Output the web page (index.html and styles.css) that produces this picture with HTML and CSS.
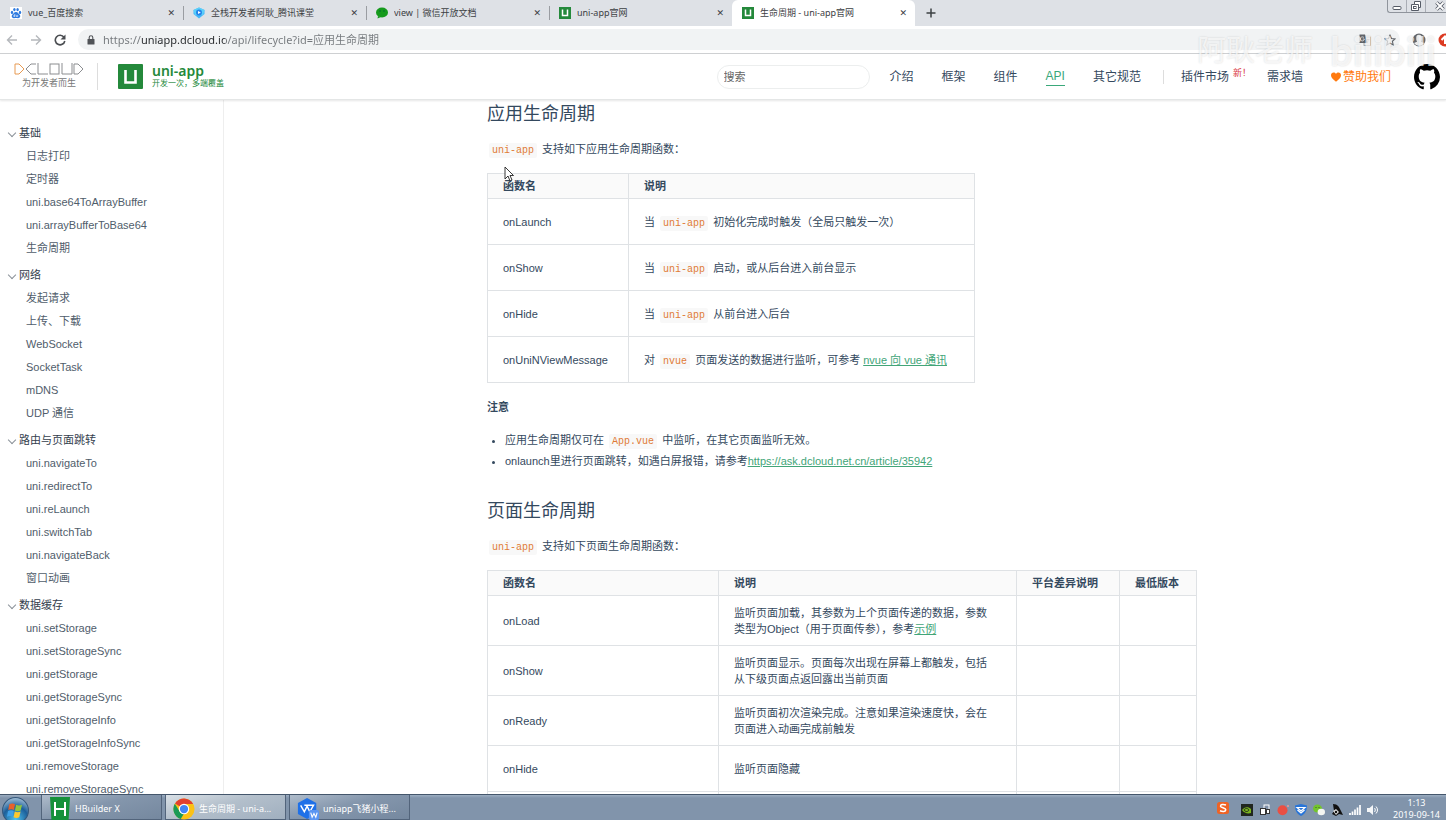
FILE: index.html
```html
<!DOCTYPE html>
<html lang="zh-CN">
<head>
<meta charset="utf-8">
<title>生命周期 - uni-app官网</title>
<link rel="stylesheet" href="styles.css">
</head>
<body>
<div class="screen">
  <div class="tabstrip">
    <div class="tab">
      <svg class="favicon" viewBox="0 0 12 12"><rect width="12" height="12" fill="#fff"/><g fill="#2f7be0"><ellipse cx="2" cy="5.4" rx="1.2" ry="1.6"/><ellipse cx="4.4" cy="2.6" rx="1.2" ry="1.7"/><ellipse cx="7.6" cy="2.6" rx="1.2" ry="1.7"/><ellipse cx="10" cy="5.4" rx="1.2" ry="1.6"/><path d="M6 5c2 0 2.300 1.500 3.500 2.600C11 9 10.200 11.300 8 11.200c-1.500-.2-2.500-.2-4 0C1.800 11.300 1 9 2.500 7.600 3.700 6.500 4 5 6 5z"/></g><path d="M4.800 7v2.500h-1v-1.200h1M6.300 7.900v1.600h1.400V7.900" fill="none" stroke="#fff" stroke-width=".6"/></svg>
      <span class="tab-title">vue_百度搜索</span><button class="tab-close" aria-label="关闭标签页">✕</button>
    </div>
    <div class="tab divided">
      <svg class="favicon" viewBox="0 0 12 12"><path d="M6 .5 11.500 3v4L6 11.500.5 7V3z" fill="#45b6f7"/><path d="M.5 3 6 .5 11.500 3 10 8H2z" fill="#5bd0fa"/><circle cx="6" cy="5.500" r="3" fill="#2584ea"/><path d="m5 4 2.800 1.500L5 7z" fill="#fff"/></svg>
      <span class="tab-title">全栈开发者阿耿_腾讯课堂</span><button class="tab-close" aria-label="关闭标签页">✕</button>
    </div>
    <div class="tab divided">
      <svg class="favicon" viewBox="0 0 12 12"><ellipse cx="6" cy="5.500" rx="6" ry="5" fill="#159a1c"/><path d="M2 9 1.500 11.500 5 10z" fill="#159a1c"/><circle cx="4" cy="4" r=".8" fill="#063"/><circle cx="8" cy="4" r=".8" fill="#063"/></svg>
      <span class="tab-title">view | 微信开放文档</span><button class="tab-close" aria-label="关闭标签页">✕</button>
    </div>
    <div class="tab divided">
      <svg class="favicon" viewBox="0 0 12 12"><rect width="12" height="12" fill="#24893b"/><path d="M3.500 2.500v6h5v-6" fill="none" stroke="#fff" stroke-width="1.500"/></svg>
      <span class="tab-title">uni-app官网</span><button class="tab-close" aria-label="关闭标签页">✕</button>
    </div>
    <div class="tab active">
      <svg class="favicon" viewBox="0 0 12 12"><rect width="12" height="12" fill="#24893b"/><path d="M3.500 2.500v6h5v-6" fill="none" stroke="#fff" stroke-width="1.500"/></svg>
      <span class="tab-title">生命周期 - uni-app官网</span><button class="tab-close" aria-label="关闭标签页">✕</button>
    </div>
    <button class="new-tab" aria-label="新标签页"><svg viewBox="0 0 10 10"><path d="M5 .5v9M.5 5h9" stroke="#3c4043" stroke-width="1.500"/></svg></button>
    <div class="window-controls">
      <button aria-label="最小化"><svg viewBox="0 0 12 12"><rect x="2" y="6.500" width="8" height="3" rx="1" fill="#fff" stroke="#555b66"/></svg></button>
      <button aria-label="还原"><svg viewBox="0 0 12 12"><path d="M4.500 1.500h6v6h-2v3h-7v-6h3z" fill="#fff" stroke="#555b66"/><path d="M4.500 4.500h4v4" fill="none" stroke="#555b66"/><rect x="3.500" y="6.500" width="2.500" height="2" fill="none" stroke="#555b66"/></svg></button>
      <button class="wide" aria-label="关闭"><svg viewBox="0 0 12 12"><path d="m2.500 2.500 7 7m0-7-7 7" stroke="#555b66" stroke-width="3.500"/><path d="m2.500 2.500 7 7m0-7-7 7" stroke="#fff" stroke-width="1.800"/></svg></button>
    </div>
  </div>

  <div class="toolbar">
    <button class="tool" aria-label="后退"><svg viewBox="0 0 12 12"><path d="M11 6H1.500M6 1.500 1.500 6 6 10.500" fill="none" stroke="#b5b8bc" stroke-width="1.400"/></svg></button>
    <button class="tool" aria-label="前进"><svg viewBox="0 0 12 12"><path d="M1 6h9.500M6 1.500 10.500 6 6 10.500" fill="none" stroke="#b5b8bc" stroke-width="1.400"/></svg></button>
    <button class="tool" aria-label="重新加载"><svg viewBox="0 0 12 12"><path d="M10 3.200A4.800 4.800 0 1 0 10.800 7" fill="none" stroke="#4a4d51" stroke-width="1.600"/><path d="M11.500.5v5h-5z" fill="#4a4d51"/></svg></button>
    <div class="omnibox">
      <svg class="lock" viewBox="0 0 8 10"><rect x=".5" y="4" width="7" height="5.500" rx=".6" fill="#505357"/><path d="M2.200 4V2.600a1.800 1.800 0 0 1 3.600 0V4" fill="none" stroke="#505357" stroke-width="1.100"/></svg>
      <input class="url" aria-label="地址栏" value="https://uniapp.dcloud.io/api/lifecycle?id=应用生命周期">
      <svg class="omni-icon" viewBox="0 0 12 12"><rect x="5" y="3" width="6.500" height="8.500" fill="#eee" stroke="#999" stroke-width=".8"/><path d="M.5.5H6l2.500 8.500h-8z" fill="#5f6368"/><path d="M5 3.700A2 2 0 1 0 5.400 5H3.700" fill="none" stroke="#eee" stroke-width=".8"/><path d="M7.500 5.500h3M9 5.500v1c0 1-1 2-1.500 2.500" fill="none" stroke="#888" stroke-width=".7"/></svg>
      <svg class="omni-icon" viewBox="0 0 12 12"><path d="m6 1.200 1.500 3.300 3.600.4-2.700 2.400.8 3.600L6 9.100l-3.200 1.800.8-3.600L.9 4.900l3.600-.4z" fill="none" stroke="#5f6368" stroke-width="1.100"/></svg>
    </div>
    <svg class="avatar" viewBox="0 0 14 14"><circle cx="7" cy="7" r="6.500" fill="#65696e"/><path d="M4.300 4.500a2.700 2.700 0 0 1 5.400 0v2c0 1-.7 1.600-.7 2.200l3 1.300A6 6 0 0 1 2 10l3-1.300c0-.6-.7-1.200-.7-2.200z" fill="#eee"/></svg>
    <svg class="extension" viewBox="0 0 14 14"><circle cx="7" cy="7" r="6.500" fill="#dc3b22"/><path d="M7 3v8M3.500 7 7 3.500 10.500 7" stroke="#fff" stroke-width="2" fill="none"/></svg>
  </div>

  <header class="site-header">
    <div class="dcloud">
      <svg viewBox="0 0 70 12" role="img" aria-label="DCLOUD"><g fill="none" stroke-width="1"><polyline points="1,1 5,1 10,6 5,11 1,11 1,1" stroke="#e79a52"/><g stroke="#8b8d90"><polyline points="22,1 17,1 12,6 17,11 22,11"/><polyline points="24,0 24,11 34,11"/><rect x="36" y="1" width="9" height="10"/><polyline points="48,0 48,11 58,11 58,0"/><polyline points="60,1 64,1 69,6 64,11 60,11 60,1"/></g></g></svg>
      <span>为开发者而生</span>
    </div>
    <a class="brand" href="#">
      <svg viewBox="0 0 25 25"><rect width="25" height="25" rx="1" fill="#24893b"/><path d="M7.500 6v12.500h10V6" fill="none" stroke="#fff" stroke-width="2.600"/></svg>
      <span class="brand-text"><strong>uni-app</strong><small>开发一次，多端覆盖</small></span>
    </a>
    <input class="search" type="search" placeholder="搜索" aria-label="搜索">
    <nav class="nav">
      <a href="#">介绍</a><a href="#">框架</a><a href="#">组件</a><a href="#" class="current">API</a><a href="#">其它规范</a>
      <span class="rule"></span>
      <a href="#" class="market">插件市场<sup>新！</sup></a><a href="#">需求墙</a>
      <a href="#" class="sponsor"><svg viewBox="0 0 10 10"><path d="M5 9.700C2 7.200 0 5.500 0 3.200 0 .2 3.700-.3 5 2c1.300-2.300 5-1.800 5 1.200 0 2.300-2 4-5 6.500z" fill="#ff7a0f"/></svg>赞助我们</a>
      <a href="#" class="github" aria-label="GitHub"><svg viewBox="0 0 16 16"><path d="M8 0C3.580 0 0 3.580 0 8c0 3.540 2.290 6.530 5.470 7.590.4.070.55-.17.55-.38 0-.19-.01-.82-.01-1.490-2.010.37-2.530-.49-2.690-.94-.09-.23-.48-.94-.82-1.130-.28-.15-.68-.52-.01-.53.63-.01 1.080.58 1.230.82.72 1.210 1.870.87 2.330.66.070-.52.28-.87.51-1.070-1.780-.2-3.640-.89-3.640-3.950 0-.87.31-1.590.82-2.150-.08-.2-.36-1.020.08-2.120 0 0 .67-.21 2.200.82a7.600 7.600 0 0 1 4 0c1.530-1.040 2.200-.82 2.200-.82.44 1.100.16 1.920.08 2.120.51.56.82 1.270.82 2.150 0 3.070-1.870 3.750-3.650 3.950.29.25.54.73.54 1.480 0 1.070-.01 1.930-.01 2.200 0 .21.15.46.55.38A8 8 0 0 0 16 8c0-4.420-3.580-8-8-8z"/></svg></a>
    </nav>
  </header>

  <div class="page">
    <aside class="sidebar">
      <details open><summary>基础</summary>
        <a href="#">日志打印</a><a href="#">定时器</a><a href="#">uni.base64ToArrayBuffer</a><a href="#">uni.arrayBufferToBase64</a><a href="#">生命周期</a></details>
      <details open><summary>网络</summary>
        <a href="#">发起请求</a><a href="#">上传、下载</a><a href="#">WebSocket</a><a href="#">SocketTask</a><a href="#">mDNS</a><a href="#">UDP 通信</a></details>
      <details open><summary>路由与页面跳转</summary>
        <a href="#">uni.navigateTo</a><a href="#">uni.redirectTo</a><a href="#">uni.reLaunch</a><a href="#">uni.switchTab</a><a href="#">uni.navigateBack</a><a href="#">窗口动画</a></details>
      <details open><summary>数据缓存</summary>
        <a href="#">uni.setStorage</a><a href="#">uni.setStorageSync</a><a href="#">uni.getStorage</a><a href="#">uni.getStorageSync</a><a href="#">uni.getStorageInfo</a><a href="#">uni.getStorageInfoSync</a><a href="#">uni.removeStorage</a><a href="#">uni.removeStorageSync</a></details>
    </aside>

    <main class="content">
      <article class="article">
        <h2>应用生命周期</h2>
        <p><code>uni-app</code> 支持如下应用生命周期函数：</p>
        <table class="app-table">
          <colgroup><col class="c-name"><col></colgroup>
          <thead><tr><th>函数名</th><th>说明</th></tr></thead>
          <tbody>
            <tr><td>onLaunch</td><td>当 <code>uni-app</code> 初始化完成时触发（全局只触发一次）</td></tr>
            <tr><td>onShow</td><td>当 <code>uni-app</code> 启动，或从后台进入前台显示</td></tr>
            <tr><td>onHide</td><td>当 <code>uni-app</code> 从前台进入后台</td></tr>
            <tr><td>onUniNViewMessage</td><td>对 <code>nvue</code> 页面发送的数据进行监听，可参考 <a href="#">nvue 向 vue 通讯</a></td></tr>
          </tbody>
        </table>
        <p class="note"><strong>注意</strong></p>
        <ul>
          <li>应用生命周期仅可在 <code>App.vue</code> 中监听，在其它页面监听无效。</li>
          <li>onlaunch里进行页面跳转，如遇白屏报错，请参考<a href="#">https://ask.dcloud.net.cn/article/35942</a></li>
        </ul>
        <h2 class="second">页面生命周期</h2>
        <p><code>uni-app</code> 支持如下页面生命周期函数：</p>
        <table class="page-table">
          <colgroup><col class="c-func"><col class="c-desc"><col class="c-platform"><col></colgroup>
          <thead><tr><th>函数名</th><th>说明</th><th>平台差异说明</th><th>最低版本</th></tr></thead>
          <tbody>
            <tr><td>onLoad</td><td>监听页面加载，其参数为上个页面传递的数据，参数<br>类型为Object（用于页面传参），参考<a href="#">示例</a></td><td></td><td></td></tr>
            <tr><td>onShow</td><td>监听页面显示。页面每次出现在屏幕上都触发，包括<br>从下级页面点返回露出当前页面</td><td></td><td></td></tr>
            <tr><td>onReady</td><td>监听页面初次渲染完成。注意如果渲染速度快，会在<br>页面进入动画完成前触发</td><td></td><td></td></tr>
            <tr><td>onHide</td><td>监听页面隐藏</td><td></td><td></td></tr>
            <tr><td></td><td></td><td></td><td></td></tr>
          </tbody>
        </table>
      </article>
    </main>
  </div>

  <footer class="taskbar">
    <button class="start" aria-label="开始"><svg viewBox="0 0 26 26"><defs><radialGradient id="orb" cx=".5" cy=".85" r=".9"><stop offset="0" stop-color="#4fc3ee"/><stop offset=".55" stop-color="#1c5f9a"/><stop offset="1" stop-color="#b9cfe0"/></radialGradient></defs><circle cx="13" cy="13" r="12.500" fill="url(#orb)" stroke="#35587c"/><path d="M7 7c2-1 4-1 5.500 0L11.500 12.500C10 11.500 8 11.600 6 12.500z" fill="#e8622a"/><path d="M13.500 7.500c2 1 3.800 1 5.800 0L18 13c-2 1-4 .8-5.500 0z" fill="#8fc63f"/><path d="M5.800 13.500c2-1 4-1 5.500 0L10.200 19c-1.600-1-3.600-1-5.400 0z" fill="#3fa0e6"/><path d="M12.300 14c1.800 1 3.700 1 5.600 0l-1.300 5.500c-1.800 1-3.800.8-5.500 0z" fill="#fcc92f"/></svg></button>
    <button class="task"><svg viewBox="0 0 22 24"><path d="M1 0h20l-1.500 24h-17z" fill="#16913a"/><path d="M6 5v14M16 5v14M6 12h10" stroke="#fff" stroke-width="2"/></svg><span>HBuilder X</span></button>
    <button class="task lit"><svg viewBox="0 0 24 24"><circle cx="12" cy="12" r="11.500" fill="#fbc116"/><path d="M12 12 2.200 6A11.500 11.500 0 0 1 22 6.500H12z" fill="#e2412f"/><path d="M2 6.200 7.500 15l4.500 2-3.500 6A11.500 11.500 0 0 1 2 6.200z" fill="#1a9a56"/><circle cx="12" cy="12" r="5.700" fill="#fff"/><circle cx="12" cy="12" r="4.500" fill="#4285f4"/></svg><span>生命周期 - uni-a...</span></button>
    <button class="task"><svg viewBox="0 0 24 24"><path d="M11 0 21 5.500v12L11 23 1 17.500v-12z" fill="#1e70e8"/><path d="m4 8 4 7 3-6 3 6 4-7H8" fill="none" stroke="#fff" stroke-width="1.600"/><rect x="13" y="13" width="11" height="11" rx="2" fill="#5a95f2"/><path d="m15 16 1.500 5 2-4 2 4 1.500-5" fill="none" stroke="#fff" stroke-width="1.200"/></svg><span>uniapp飞猪小程...</span></button>
    <div class="tray">
      <svg class="sogou" viewBox="0 0 12 12"><rect width="12" height="12" rx="2.500" fill="#ee6325"/><path d="M9 3C6 2 3.500 2.500 3.500 4.200S8.800 5.800 8.800 7.800 5.500 9.800 3 8.800" fill="none" stroke="#fff" stroke-width="1.500"/></svg>
      <svg viewBox="0 0 12 12"><rect width="12" height="12" fill="#20261f"/><path d="M1 6c2-3 6-4 9-1v4C7 10 3 9 1 6z" fill="#7ab51d"/><path d="M3 6c1-2 4-2 5 0-1 2-3.500 2-5 0z" fill="none" stroke="#20261f"/></svg>
      <svg viewBox="0 0 12 12"><rect x="5" y="1" width="5" height="5" fill="#8091a8" stroke="#fff"/><rect x="1.500" y="4.500" width="5" height="6" fill="#fff" stroke="#333"/><rect x="7.500" y="5.500" width="3" height="4" fill="#fff" stroke="#333"/></svg>
      <svg viewBox="0 0 12 12"><circle cx="5.500" cy="6.300" r="5" fill="#ea4f43"/><circle cx="11" cy="2" r="1" fill="#e99"/></svg>
      <svg viewBox="0 0 12 12"><path d="M6 0 12 1.500C12 7 10 10 6 12 2 10 0 7 0 1.500z" fill="#2875d8"/><path d="M2 3.500h8L6 7zM2.500 6 6 9l3.500-3" fill="none" stroke="#fff" stroke-width="1.200"/></svg>
      <svg viewBox="0 0 12 12"><ellipse cx="4.500" cy="4.500" rx="4.500" ry="4" fill="#72c52d"/><ellipse cx="8.300" cy="8" rx="3.700" ry="3.300" fill="#f4f6f2"/><g fill="#333"><circle cx="3" cy="3.500" r=".5"/><circle cx="6" cy="3.500" r=".5"/></g></svg>
      <svg viewBox="0 0 12 12"><path d="M2 0c5 0 6 3 8 7l2 4-4-1-3 2-4-2 2-3z" fill="#111"/><path d="m2 7 3-2 3 3-3 3z" fill="#ddd"/><circle cx="5" cy="8" r="1.200" fill="#111"/></svg>
      <svg viewBox="0 0 12 12"><path d="M1 11V9m2.500 2V7.500M6 11V5.500M8.500 11V3.500M11 11V1" stroke="#fff" stroke-width="1.700"/></svg>
      <svg viewBox="0 0 12 12"><path d="M0 4h2.500L6 1v10L2.500 8H0z" fill="#f4f6f8"/><path d="M7.500 4c1 1.200 1 2.800 0 4M9 2.500c2 2 2 5 0 7" fill="none" stroke="#fff"/></svg>
      <div class="clock"><span>1:13</span><span>2019-09-14</span></div>
    </div>
  </footer>

  <div class="watermark"><span>阿耿老师</span><b>bilibili</b></div>
  <svg class="cursor" viewBox="0 0 10 16"><path d="M1 1v12l3-3 2 5 2-1-2-4.500h3.500z" fill="#fff" stroke="#222" stroke-width=".9"/></svg>
</div>
</body>
</html>
```
FILE: styles.css
```css
* { box-sizing: border-box; }
body {
  margin: 0;
  font: 11px/16px "Liberation Sans", "Noto Sans CJK SC", sans-serif;
  color: #34495e;
  background: #fff;
}
a { color: inherit; text-decoration: none; }
button { margin: 0; padding: 0; border: 0; background: none; color: inherit; font: inherit; }
svg { display: block; flex: none; }
.screen { position: relative; display: flex; flex-direction: column; height: 100vh; overflow: hidden; }

/* Browser tabs */
.tabstrip { display: flex; flex: none; height: 26px; background: #dee1e6; font-family: "Noto Sans", "Noto Sans CJK SC", sans-serif; font-size: 9px; color: #3c4043; }
.tab { position: relative; display: flex; align-items: center; gap: 6px; flex: 0 1 183px; padding: 0 8px 0 10px; }
.tab.divided::before { content: ""; position: absolute; left: 0; top: 6px; height: 14px; border-left: 1px solid #9a9da2; }
.tab.active { background: #fff; border-radius: 6px 6px 0 0; }
.favicon { width: 12px; height: 12px; }
.tab-title { flex: 1; overflow: hidden; white-space: nowrap; }
.tab-close { font: 9px/12px "DejaVu Sans", sans-serif; }
.new-tab { display: flex; align-items: center; padding: 0 11px; }
.new-tab svg { width: 10px; height: 10px; }
.window-controls { display: flex; height: 13px; margin-left: auto; border: 1px solid #8f949c; border-width: 0 0 1px 1px; border-radius: 0 0 0 3px; }
.window-controls button { display: flex; justify-content: center; width: 19px; border-right: 1px solid #a9adb5; }
.window-controls .wide { width: 20px; justify-content: flex-end; border: 0; }
.window-controls svg { width: 12px; height: 12px; }

/* Browser toolbar */
.toolbar { display: flex; flex: none; align-items: center; gap: 12px; height: 28px; padding-left: 6px; border-bottom: 1px solid #cfd1d3; overflow: hidden; }
.tool svg { width: 12px; height: 12px; }
.omnibox { display: flex; flex: 1; align-items: center; gap: 13px; height: 21px; padding: 0 4px 0 9px; border-radius: 11px; background: #f1f3f4; }
.lock { width: 8px; height: 10px; margin-right: -5px; }
.url {
  flex: 1; min-width: 0; padding: 0; border: 0; outline: 0;
  font: 11px/18px "Noto Sans", "Noto Sans CJK SC", sans-serif;
  color: transparent;
  background: linear-gradient(90deg, #74787c 38px, #24272a 38px 122px, #74787c 122px) text;
}
.omni-icon { width: 12px; height: 12px; }
.avatar { width: 14px; height: 14px; }
.extension { width: 14px; height: 14px; margin-right: -6px; }

/* Site header */
.site-header { z-index: 1; display: flex; flex: none; align-items: center; height: 46px; padding: 0 6px 0 14px; border-bottom: 1px solid #e4e6e6; box-shadow: 0 1px 2px #0000001a; background: #fff; }
.dcloud { display: flex; flex-direction: column; align-items: center; gap: 2px; padding-right: 13px; border-right: 1px solid #ddd; }
.dcloud svg { width: 70px; height: 12px; }
.dcloud span { font-size: 9px; line-height: 13px; color: #777; white-space: nowrap; }
.brand { display: flex; align-items: center; gap: 9px; margin-left: 20px; color: #24893b; }
.brand svg { width: 25px; height: 25px; }
.brand-text { display: flex; flex-direction: column; white-space: nowrap; }
.brand strong { font: 600 14px/15px "Noto Sans", sans-serif; }
.brand small { font-size: 8px; line-height: 12px; }
.search { width: 153px; height: 24px; margin-left: auto; padding: 0 6px; border: 1px solid #eceeee; border-radius: 12px; background: #fff; font: inherit; outline: 0; }
.search::placeholder { color: #666; opacity: 1; }
.nav { display: flex; align-items: center; gap: 28px; margin-left: 20px; font-size: 12px; line-height: 18px; white-space: nowrap; }
.current { line-height: 17px; color: #3aa87a; border-bottom: 1px solid #3aa87a; }
.rule { height: 14px; margin: 0 -11px 0 -6px; border-left: 1px solid #ddd; }
.market { margin-right: -12px; }
.market sup { margin-left: 4px; font-size: 9px; line-height: 9px; color: #d9363e; }
.sponsor { display: flex; align-items: center; gap: 2px; margin-right: -5px; color: #ff7a0f; }
.sponsor svg { width: 10px; height: 10px; }
.github svg { width: 26px; height: 26px; }

/* Documentation */
.page { display: flex; flex: 1; min-height: 0; overflow: hidden; }
.sidebar { flex: none; width: 224px; padding-top: 18px; border-right: 1px solid #eee; color: #505d6b; overflow: hidden; }
.sidebar details { margin-top: 4px; }
.sidebar summary { display: flex; align-items: center; gap: 4px; padding-left: 9px; line-height: 23px; color: #34404d; }
.sidebar summary::before { content: ""; width: 5px; height: 5px; border: 1px solid #8a9199; border-width: 0 1px 1px 0; transform: translateY(-1px) rotate(45deg); }
.sidebar a { display: block; padding-left: 26px; line-height: 23px; }
.content { flex: 1; min-width: 0; overflow: hidden; }
.article { max-width: 724px; margin: 0 auto; padding: 1px 0 0 14px; }
.article h2 { margin: 0 0 13px; font-size: 18px; line-height: 26px; font-weight: 400; }
.article p { margin: 0; line-height: 18px; }
.article a { color: #42a578; text-decoration: underline; }
code { margin: 0 2px; padding: 2px 3px; border-radius: 2px; background: #f8f8f8; color: #e07b35; font: 10px/12px "Liberation Mono", monospace; }
table { table-layout: fixed; border-collapse: collapse; margin-top: 15px; }
th, td { padding: 0 15px; border: 1px solid #dfe2e5; text-align: left; white-space: nowrap; }
th { height: 25px; background: #fafafa; }
td { height: 46px; }
.app-table { width: 488px; }
.c-name { width: 141px; }
.page-table { width: 710px; }
.c-func { width: 231px; }
.c-desc { width: 298px; }
.c-platform { width: 103px; }
.page-table tbody tr:nth-child(-n+3) td { height: 50px; }
.article .note { margin-top: 15px; }
.article ul { margin: 14px 0 0; padding-left: 18px; }
.article li { line-height: 21px; }
.article .second { margin-top: 26px; }

/* Taskbar */
.taskbar { z-index: 1; display: flex; flex: none; gap: 3px; height: 26px; border-top: 1px solid #44566b; background: linear-gradient(#9caec2, #8194ab 3px); color: #fff; font-size: 9px; font-family: "Noto Sans", "Noto Sans CJK SC", sans-serif; overflow: hidden; }
.start { width: 38px; padding: 2px 0 0 2px; }
.start svg { width: 27px; height: 27px; }
.task { display: flex; align-items: center; gap: 4px; width: 121px; padding: 3px 0 0 7px; border: 1px solid #52647b; border-top: 0; background: linear-gradient(165deg, #afbccb, #8496ac 45%, #75889f); white-space: nowrap; }
.task.lit { background: linear-gradient(165deg, #d9e0e6, #b3bfcb 45%, #a0afbf); }
.task svg { width: 22px; height: 24px; }
.tray { display: flex; align-items: center; gap: 6px; margin-left: auto; padding-top: 4px; }
.tray svg { width: 12px; height: 12px; }
.tray .sogou { margin: 0 6px 4px 0; }
.clock { display: flex; flex-direction: column; align-items: center; align-self: flex-start; padding: 0 6px 0 8px; line-height: 12px; margin-top: -2px; }

/* Video overlay */
.watermark { position: absolute; z-index: 2; top: 26px; right: 10px; display: flex; align-items: center; gap: 17px; color: #ffffffb0; text-shadow: 0 0 2px #00000026; pointer-events: none; white-space: nowrap; }
.watermark span { font-size: 29px; line-height: 50px; }
.watermark b { font: bold 40px/46px Lato, sans-serif; }
.cursor { position: absolute; z-index: 2; left: 504px; top: 166px; width: 10px; height: 16px; }
```
